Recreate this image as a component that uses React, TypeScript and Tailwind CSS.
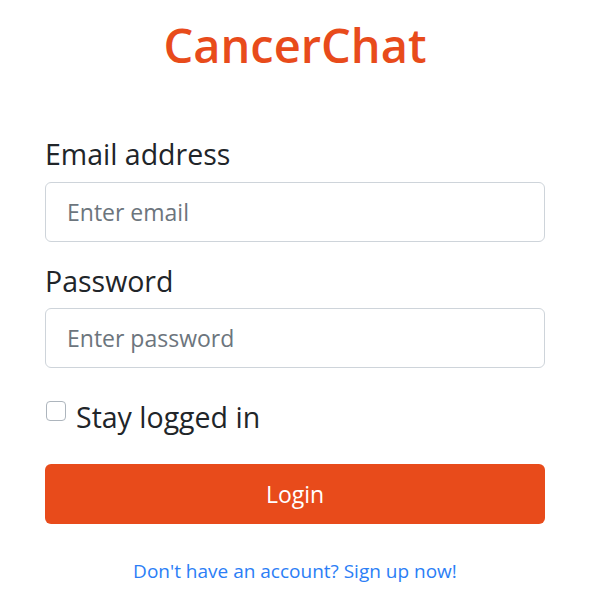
export default function App() {
  return (
    <div className="w-[611px] h-[601px] bg-white font-['Open_Sans',sans-serif] text-[#212529]">
      <div className="ml-[45px] w-[500px] pt-[17px]">
        <h1 className="text-center text-[47px] leading-[1.2] font-semibold text-[#e84b1b]">CancerChat</h1>

        <form className="mt-[64px] flex flex-col" onSubmit={(e) => e.preventDefault()}>
          <label className="block text-[28.5px] leading-[1.2] mb-[10px]">Email address</label>
          <input
            type="email"
            placeholder="Enter email"
            className="h-[60px] w-full rounded-md border border-[#ced4da] px-[21px] text-[23px] outline-none placeholder:text-[#6c757d]"
          />

          <label className="block text-[28.5px] leading-[1.2] mt-[22px] mb-[10px]">Password</label>
          <input
            type="password"
            placeholder="Enter password"
            className="h-[60px] w-full rounded-md border border-[#ced4da] px-[21px] text-[23px] outline-none placeholder:text-[#6c757d]"
          />

          <label className="mt-[32px] flex items-start gap-[10px] text-[28.5px] leading-[1.2]">
            <span className="h-[20px] w-[20px] shrink-0 rounded-[4px] border border-[#adb5bd] bg-white mt-[1px] ml-px" />
            Stay logged in
          </label>

          <button
            type="submit"
            className="mt-[30px] h-[60px] w-full rounded-md bg-[#e84b1b] text-[23px] text-white"
          >
            Login
          </button>
        </form>

        <p className="mt-[36px] text-center text-[19px] leading-[1.2] text-[#2b7ef6]">
          Don't have an account? Sign up now!
        </p>
      </div>
    </div>
  );
}
